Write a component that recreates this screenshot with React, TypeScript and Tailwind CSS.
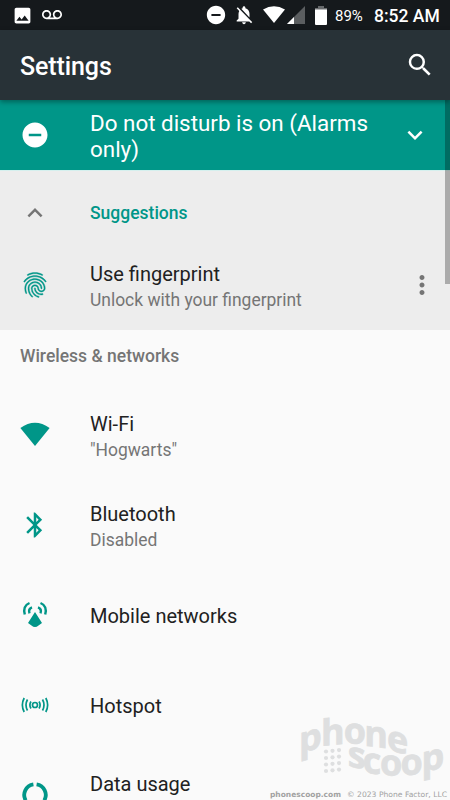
import type { ReactNode } from "react";
import {
  MdBluetooth,
  MdDoNotDisturbOn,
  MdExpandLess,
  MdExpandMore,
  MdFingerprint,
  MdImage,
  MdMoreVert,
  MdNotificationsOff,
  MdSearch,
  MdVoicemail,
} from "react-icons/md";

function StatusBar() {
  return (
    <div className="flex h-[30px] shrink-0 items-center bg-[#15191c] text-white">
      <MdImage className="ml-[12px] size-[21px]" />
      <MdVoicemail className="ml-[9px] size-[20px]" />
      <MdDoNotDisturbOn className="ml-[143px] size-[22px]" />
      <MdNotificationsOff className="ml-[6px] size-[22px]" />
      <svg className="ml-[8px] h-[18px] w-[43px]" viewBox="0 0 43 18">
        <path d="M0 3.5Q11 -3 22 3.5L11 17Z" fill="#fff" />
        <path d="M42 0V18H24Z" fill="#5b5e60" />
        <path d="M31 11V18H24Z" fill="#fff" />
      </svg>
      <svg className="ml-[9px] h-[19px] w-[13px]" viewBox="0 0 13 19">
        <path d="M3 0H9V2H12V4H0V2H3Z" fill="#66696b" />
        <path d="M0 3.5H12V18Q12 19 11 19H1Q0 19 0 18Z" fill="#fff" />
      </svg>
      <span className="ml-[7px] w-[39px] pt-[2px] text-[15px]">89%</span>
      <span className="whitespace-nowrap pt-[2px] text-[17.5px] font-medium">8:52 AM</span>
    </div>
  );
}

function Row({ icon, title, detail, end }: { icon: ReactNode; title: string; detail?: string; end?: ReactNode }) {
  return (
    <div className="flex h-[90px] shrink-0 items-center">
      <div className="flex w-[90px] shrink-0 pl-[20px] text-[#009688]">{icon}</div>
      <div className={detail ? "flex-1 pt-[4px]" : "flex-1 pt-[2px]"}>
        <div className="text-[20px] leading-[25px] text-[#212121]">{title}</div>
        {detail && <div className="text-[17.45px] leading-[26px] text-[#757575]">{detail}</div>}
      </div>
      {end}
    </div>
  );
}

function WifiIcon() {
  return (
    <svg className="size-[30px]" viewBox="0 0 30 30">
      <path d="M0.4 8Q15 -2.4 29.6 8L15 26Z" fill="currentColor" />
    </svg>
  );
}

function MobileIcon() {
  return (
    <svg className="size-[30px]" viewBox="0 0 30 30" fill="none" stroke="currentColor" strokeWidth="2.4">
      <path d="M15 12L22 23L18.500 25.500Q15 28.500 11.500 25.500L8 23Z" fill="currentColor" stroke="none" />
      <path d="M9.500 3Q2.500 6 4.800 14.500M20.500 3Q27.500 6 25.200 14.500M12 7.300Q8 8.800 9.500 13.300M18 7.300Q22 8.800 20.500 13.300" />
    </svg>
  );
}

function HotspotIcon() {
  return (
    <svg className="size-[30px]" viewBox="0 0 30 30" fill="none" stroke="currentColor" strokeWidth="1.7">
      <circle cx="15" cy="15" r="2.500" />
      <path d="M11 11.500Q8.800 15 11 18.500M19 11.500Q21.200 15 19 18.500M7.500 9.500Q4.500 15 7.500 20.500M22.500 9.500Q25.500 15 22.500 20.500M4.200 8Q.500 15 4.200 22M25.800 8Q29.500 15 25.800 22" />
    </svg>
  );
}

function DataIcon() {
  return (
    <svg className="size-[30px]" viewBox="0 0 30 30" fill="none" stroke="currentColor" strokeWidth="3.800">
      <path d="M16.600 4.300A10.800 10.800 0 0 1 24.300 20.400M13.400 4.300A10.800 10.800 0 0 0 5.700 20.400M7.500 22.600A10.800 10.800 0 0 0 22.500 22.600" />
    </svg>
  );
}

function Watermark() {
  return (
    <div className="absolute bottom-0 right-0 h-[110px] w-[184px]">
      <svg className="h-full w-full" viewBox="266 690 184 110" fill="#dedfe0">
        <g className="font-['Open_Sans',sans-serif] text-[36px] font-bold" stroke="#dedfe0" strokeWidth="0.7">
          <text transform="matrix(1 -.28 0 1 299 753.500)">p</text>
          <text transform="matrix(1 -.1 0 1 321 746)">h</text>
          <text transform="matrix(1 .03 0 1 343.700 743.200)">o</text>
          <text transform="matrix(1 .12 0 1 364.300 745.500)">n</text>
          <text transform="matrix(1 .25 0 1 387 749.500)">e</text>
          <text transform="matrix(1 .2 0 1 347.800 766)">s</text>
          <text transform="matrix(1 .15 0 1 362.800 772)">c</text>
          <text transform="matrix(1 .04 0 1 380 775)">o</text>
          <text transform="matrix(1 -.05 0 1 400.500 775.300)">o</text>
          <text transform="matrix(1 -.22 0 1 421.500 772.500)">p</text>
        </g>
        {[0, 1, 2, 3].map((r) =>
          [0, 1, 2].map((c) => <circle key={`${r}-${c}`} cx={326 + c * 6.5} cy={751.5 + r * 6.5 - c * 0.7} r="2.1" />),
        )}
        <g className="font-['DejaVu_Sans',sans-serif] text-[7.5px]" fill="#a2a2a2">
          <text x="270" y="797" className="font-bold" textLength="71" lengthAdjust="spacingAndGlyphs">
            phonescoop.com
          </text>
          <text x="347" y="797" textLength="100" lengthAdjust="spacingAndGlyphs">
            © 2023 Phone Factor, LLC
          </text>
        </g>
      </svg>
    </div>
  );
}

export default function App() {
  return (
    <div className="relative flex h-[800px] w-[450px] flex-col overflow-hidden bg-[#fafafa] font-['Roboto',sans-serif]">
      <StatusBar />
      <header className="z-10 flex h-[70px] shrink-0 items-center justify-between bg-[#283237] pl-[20px] pr-[15px] pt-[3px] text-white shadow-[0_2px_5px_rgba(0,0,0,0.35)]">
        <h1 className="text-[25px] font-medium tracking-[-0.1px]">Settings</h1>
        <MdSearch className="mb-[3px] size-[30px]" />
      </header>
      <div className="flex h-[70px] shrink-0 items-center bg-[#009688] text-white">
        <MdDoNotDisturbOn className="ml-[20px] size-[30px]" />
        <p className="ml-[40px] w-[300px] pt-[1px] text-[22.4px] leading-[26px]">Do not disturb is on (Alarms only)</p>
        <MdExpandMore className="ml-[10px] size-[30px]" />
      </div>
      <section className="flex h-[160px] shrink-0 flex-col border-t border-[#d5f0ee] bg-[#ededed]">
        <div className="flex h-[69px] shrink-0 items-center pt-[15px]">
          <MdExpandLess className="ml-[20px] size-[30px] text-[#757575]" />
          <span className="ml-[40px] text-[17.5px] font-medium text-[#009688]">Suggestions</span>
        </div>
        <Row
          icon={<MdFingerprint className="size-[30px] stroke-current stroke-[0.3px] [&>path[fill=none]]:stroke-none" />}
          title="Use fingerprint"
          detail="Unlock with your fingerprint"
          end={<MdMoreVert className="mr-[13px] size-[30px] text-[#757575]" />}
        />
      </section>
      <h2 className="flex h-[60px] shrink-0 pt-[13px] text-[17.5px] font-medium text-[#757575]">
        <span className="pl-[20px]">Wireless &amp; networks</span>
      </h2>
      <Row icon={<WifiIcon />} title="Wi-Fi" detail={'"Hogwarts"'} />
      <Row icon={<MdBluetooth className="size-[30px]" />} title="Bluetooth" detail="Disabled" />
      <Row icon={<MobileIcon />} title="Mobile networks" />
      <Row icon={<HotspotIcon />} title="Hotspot" />
      <div className="flex h-[50px] shrink-0">
        <div className="flex w-[90px] shrink-0 pl-[20px] pt-[30px] text-[#009688]">
          <DataIcon />
        </div>
        <div className="pt-[22px] text-[20px] leading-[25px] text-[#212121]">Data usage</div>
      </div>
      <div className="absolute right-0 top-[100px] z-20 h-[184px] w-[5px] bg-black/28" />
      <Watermark />
    </div>
  );
}
